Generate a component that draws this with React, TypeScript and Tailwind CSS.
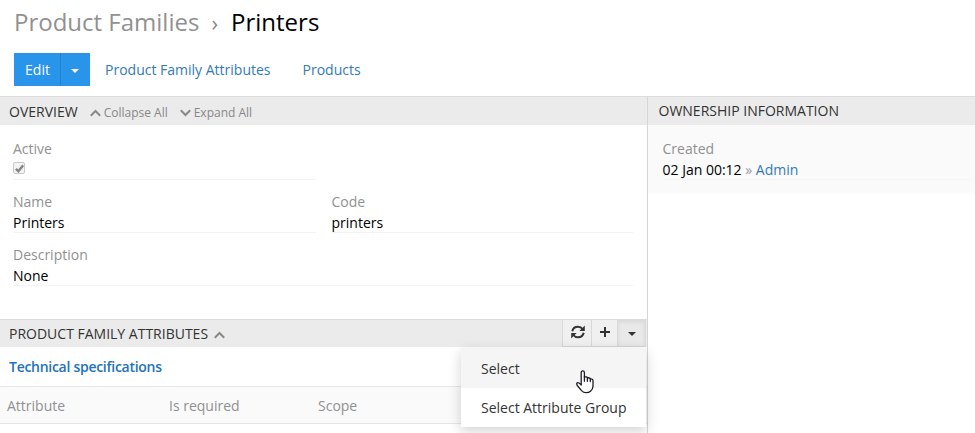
import type { ReactNode } from 'react'

function Chevron({ down = false, className = '' }: { down?: boolean; className?: string }) {
  return (
    <svg viewBox="0 0 11 8" className={`h-2 w-[11px] shrink-0 ${className}`} fill="none" stroke="currentColor" strokeWidth="2">
      <path d={down ? 'M.8 1.3 5.5 6 10.200 1.3' : 'M.8 6.7 5.5 2 10.200 6.7'} />
    </svg>
  )
}

function Caret({ className = '' }: { className?: string }) {
  return (
    <svg viewBox="0 0 8 4" className={`h-1 w-2 ${className}`} fill="currentColor">
      <path d="M0 0h8L4 4z" />
    </svg>
  )
}

function RefreshIcon() {
  return (
    <svg viewBox="0 0 14 14" className="-mt-0.5 ml-px size-[14px]" fill="none" stroke="currentColor" strokeWidth="2">
      <path d="M1.300 6.200C1.900 3.300 4.200 1.700 7 1.700c1.900 0 3.500.8 4.600 2.300M12.700 7.800c-.6 2.900-2.900 4.500-5.700 4.500-1.900 0-3.500-.8-4.600-2.300" />
      <path d="M13.800.6v5.400H8.400zM.2 13.400v-5.400h5.400z" fill="currentColor" stroke="none" />
    </svg>
  )
}

function HandPointer() {
  return (
    <svg viewBox="0 0 18 24" className="pointer-events-none absolute left-[115px] top-[22px] h-6 w-[18px]" fill="#fff" stroke="#1c1c28" strokeWidth="1.3" strokeLinejoin="round" strokeLinecap="round">
      <path d="M5.2 15V2.7q0-1.8 1.6-1.8t1.6 1.8V7q2.700-.6 3 .9 2.500-.5 2.900 1 2.500-.3 2.700 1.800V16q0 3-2.500 5.200-1.700 1.500-4.400 1.500-2.600 0-4.600-2.100L1.300 15.500Q.2 13.600 1.200 12.900q1.500-.8 4 2.100z" />
      <path d="M8.400 7v4.300M11.400 8v3.300M14.300 9v2.500" fill="none" />
    </svg>
  )
}

function Field({ label, children, className = 'border-[#f3f3f3]' }: { label: string; children: ReactNode; className?: string }) {
  return (
    <div className={`h-[41px] border-b ${className}`}>
      <div className="h-[21px] text-[#919191]">{label}</div>
      <div className="text-black">{children}</div>
    </div>
  )
}

export default function App() {
  return (
    <div className="h-[433px] w-[975px] overflow-hidden bg-white font-['Open_Sans',sans-serif] text-[14px] leading-5 text-[#333]">
      <header className="h-24 pl-3.5">
        <h1 className="flex h-[53px] items-center pb-[9px] text-[24px] leading-[30px] text-black">
          <span className="text-[#919191]">Product Families</span>
          <span className="ml-3 mr-[13px] text-[22px] text-[#888]">›</span>
          <span>Printers</span>
        </h1>
        <nav className="flex h-[33px] items-center text-[#337ab7]">
          <button className="h-[33px] w-[46px] bg-[#2895ea] pl-px text-white">Edit</button>
          <button className="flex h-[33px] w-[30px] items-center justify-center border-l border-[#2382cd] bg-[#2895ea] pr-0.5 text-white">
            <Caret className="mt-0.5" />
          </button>
          <a className="ml-[15px]">Product Family Attributes</a>
          <a className="ml-8">Products</a>
        </nav>
      </header>

      <div className="flex h-[337px] border-t border-[#dcdcdc]">
        <main className="w-[648px] border-r border-[#d6d6d6]">
          <section className="h-[222px]">
            <div className="flex h-7 items-center bg-[#ebebeb] pl-[9px] pt-0.5">
              <span>OVERVIEW</span>
              <span className="ml-3 flex items-center gap-[3px] pt-px text-[12px] text-[#888]">
                <Chevron /> Collapse All
              </span>
              <span className="ml-3 flex items-center gap-[3px] pt-px text-[12px] text-[#888]">
                <Chevron down /> Expand All
              </span>
            </div>
            <div className="grid grid-cols-[302.500px_301px] gap-x-4 gap-y-3 pl-[13px] pt-3.5">
              <Field label="Active">
                <span className="mt-0.5 flex size-3 items-center justify-center rounded-[2px] border border-[#c9c9c9] bg-[#f3f3f3]">
                  <svg viewBox="0 0 10 10" className="size-[9px] shrink-0" fill="none" stroke="#858585" strokeWidth="2.7">
                    <path d="M1 5.300 3.800 8 9 1.500" />
                  </svg>
                </span>
              </Field>
              <div />
              <Field label="Name">Printers</Field>
              <Field label="Code">printers</Field>
              <Field label="Description" className="col-span-2 border-[#f3f3f3]">None</Field>
            </div>
          </section>

          <section className="border-t border-[#dcdcdc]">
            <div className="flex h-[27px] items-center bg-[#ebebeb] pl-[9px]">
              <span className="pt-px">PRODUCT FAMILY ATTRIBUTES</span>
              <Chevron className="ml-1.5 mt-0.5 text-[#888]" />
              <div className="relative ml-auto mr-px flex h-[27px] border-b border-[#d5d5d5] text-[#333]">
                <button className="flex w-[29px] items-center justify-center border-l border-[#d8d8d8] bg-[#f0f0f0]">
                  <RefreshIcon />
                </button>
                <button className="flex w-[26px] items-center justify-center border-l border-[#d8d8d8] bg-[#f0f0f0] pl-px">
                  <svg viewBox="0 0 10 10" className="-mt-0.5 size-2.5" fill="none" stroke="currentColor" strokeWidth="2">
                    <path d="M5 0v10M0 5h10" />
                  </svg>
                </button>
                <button className="flex w-[29px] items-center justify-center border-x border-[#dadada] bg-[#e9e9e9] shadow-[inset_0_2px_4px_rgba(0,0,0,0.08)]">
                  <Caret className="mt-0.5" />
                </button>
                <div className="absolute right-0 top-7 z-10 w-[185px] bg-white shadow-[0_4px_12px_rgba(0,0,0,0.18)]">
                  <div className="h-10 bg-[#f5f5f5] pl-5 pt-[11px]">Select</div>
                  <div className="h-[39px] pl-5 pt-2.5">Select Attribute Group</div>
                  <HandPointer />
                </div>
              </div>
            </div>
            <div className="flex h-[39px] items-center pl-[9px] pt-px font-semibold tracking-[-0.28px] text-[#2273b9]">
              Technical specifications
            </div>
            <div className="grid h-[38px] grid-cols-[162px_149px_1fr] items-center border-y border-[#e6e6e6] bg-[#fafafa] pl-[7px] pt-0.5 text-[#919191]">
              <span>Attribute</span>
              <span>Is required</span>
              <span>Scope</span>
            </div>
          </section>
        </main>

        <aside className="flex-1">
          <div className="h-7 bg-[#ebebeb] pl-[10.500px] pt-1">OWNERSHIP INFORMATION</div>
          <div className="h-[69px] bg-[#fafafa] pl-[14.500px] pr-1 pt-3.5">
            <Field label="Created" className="border-[#f5f5f5]">
              02 Jan 00:12 <span className="text-[#999]">»</span> <a className="text-[#337ab7]">Admin</a>
            </Field>
          </div>
        </aside>
      </div>
    </div>
  )
}
